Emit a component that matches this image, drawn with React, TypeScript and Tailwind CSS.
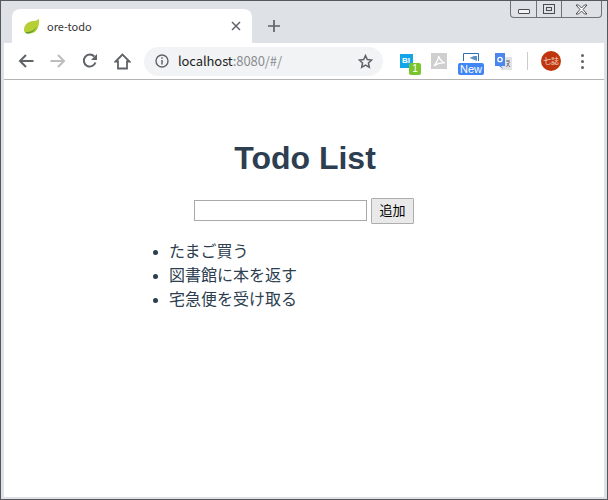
const ui = { fontFamily: '"Noto Sans CJK JP", "Liberation Sans", sans-serif' };
const latin = { fontFamily: '"Liberation Sans", sans-serif' };

function Leaf() {
  return (
    <svg width="17" height="17" viewBox="0 0 17 17" className="shrink-0">
      <path d="M1 12C1 6 6 3 11 3c2 0 4-1 5-2.500C16.500 6 15.500 15 7 15.500 3.500 15.800 1 15 1 12z" fill="#b5cf34" />
      <path d="M2.500 14C7 14.500 11 13 13.500 8.500 12 13.500 7.500 16 3.500 15.500z" fill="#5c9a2c" />
    </svg>
  );
}

function WindowControls() {
  return (
    <div className="flex h-[17px] w-[92px] rounded-b-[4px] border border-t-0 border-[#6f7378] bg-[#dee1e6]">
      <div className="flex w-[26px] items-end justify-center border-r border-[#6f7378] pb-[3px]">
        <div className="h-[5px] w-[12px] rounded-[1px] border border-[#4a4d50] bg-white/60" />
      </div>
      <div className="flex w-[25px] items-center justify-center border-r border-[#6f7378]">
        <div className="flex h-[10px] w-[12px] items-center justify-center border border-[#4a4d50]">
          <div className="h-[4px] w-[6px] border border-[#4a4d50]" />
        </div>
      </div>
      <div className="flex flex-1 items-center justify-center">
        <svg width="13" height="11" viewBox="0 0 13 11">
          <path d="M1 1h2.500L6.500 4 9.500 1H12L8 5.500l4 4.500H9.500L6.500 7 3.500 10H1l4-4.500z" fill="#fff" stroke="#4a4d50" />
        </svg>
      </div>
    </div>
  );
}

function Tabs() {
  return (
    <div className="flex h-[42px] items-end pl-[8px]">
      <div className="flex h-[34px] w-[240px] items-center rounded-t-[8px] bg-white pl-[11px] pr-[11px]">
        <Leaf />
        <span className="ml-[7px] flex-1 text-[11px] text-[#333]" style={ui}>ore-todo</span>
        <svg width="10" height="10" viewBox="0 0 10 10">
          <path d="M1 1l8 8M9 1l-8 8" stroke="#5f6368" strokeWidth="1.500" />
        </svg>
      </div>
      <div className="flex h-[34px] w-[44px] items-center justify-center">
        <svg width="12" height="12" viewBox="0 0 12 12">
          <path d="M6 0v12M0 6h12" stroke="#5f6368" strokeWidth="1.700" />
        </svg>
      </div>
      <div className="flex-1 self-start">
        <div className="ml-auto mr-[2px] w-[92px]">
          <WindowControls />
        </div>
      </div>
    </div>
  );
}

function Extensions() {
  return (
    <div className="mt-[6px] flex items-start">
      {/* blue "BI" extension with the green count badge */}
      <div className="flex w-[21px] flex-col">
        <div className="h-[14px] w-[13px] bg-[#12a5e8] pl-[2px] text-[8px] font-bold leading-[14px] text-white" style={latin}>
          BI
        </div>
        <div className="-mt-[5px] ml-[9px] h-[12px] w-[12px] rounded-[2px] bg-[#7ac52e] text-center text-[10px] leading-[12px] text-white" style={latin}>
          1
        </div>
      </div>
      <svg width="16" height="16" viewBox="0 0 16 16" className="ml-[10px] -mt-[1px]">
        <rect width="16" height="16" fill="#cfcfcf" />
        <path d="M3 13C6 9 8 6 7.500 3 9 7 11 9 14 10 10 9.500 6 10.500 3 13z" fill="none" stroke="#fff" strokeWidth="1.200" />
      </svg>
      <div className="ml-[11px] -mt-[1px] flex w-[26px] flex-col items-center">
        <svg width="16" height="9" viewBox="0 0 16 9">
          <path d="M.5 8V.5h15V8" fill="none" stroke="#2f6fb5" />
          <path d="M2 3h12v5z" fill="#5b8fc7" />
          <path d="M2 3h9l-7 3h-2z" fill="#fff" />
        </svg>
        <div className="mt-[1px] h-[12px] w-[26px] rounded-[2px] bg-[#4285f4] text-center text-[11px] leading-[12px] text-white" style={latin}>
          New
        </div>
      </div>
      <svg width="17" height="19" viewBox="0 0 17 19" className="ml-[11px] -mt-[1px]">
        <rect x="6" y="4" width="11" height="13" fill="#e1e3e6" />
        <path d="M11 8h4M13 7v2M11.500 14l3-5M12 10l3 4" stroke="#77797c" />
        <path d="M0 0h10v13H6l2 3-4-3H0z" fill="#4b86ec" />
        <circle cx="5" cy="6.500" r="2.200" fill="none" stroke="#fff" strokeWidth="1.300" />
      </svg>
    </div>
  );
}

function Toolbar() {
  return (
    <div className="flex h-[37px] items-center border-b border-[#b4b4b4] bg-white pl-[14px]">
      <svg width="16" height="14" viewBox="0 0 16 14">
        <path d="M15.500 7H2M8 1L2 7l6 6" fill="none" stroke="#5f6368" strokeWidth="2" />
      </svg>
      <svg width="16" height="14" viewBox="0 0 16 14" className="ml-[16px]">
        <path d="M.5 7H14M8 1l6 6-6 6" fill="none" stroke="#bdbdbd" strokeWidth="2" />
      </svg>
      <svg width="16" height="16" viewBox="0 0 16 16" className="ml-[16px]">
        <path d="M13.500 9.500A6 6 0 1 1 12.300 3.500" fill="none" stroke="#5f6368" strokeWidth="2" />
        <path d="M15 1v6H9z" fill="#5f6368" />
      </svg>
      <svg width="17" height="17" viewBox="0 0 17 17" className="ml-[16px]">
        <path d="M8.500 1.500L1.500 8.500H4V15.500H13V8.500H15.500z" fill="none" stroke="#5f6368" strokeWidth="1.800" />
      </svg>
      <div className="ml-[13px] flex h-[29px] w-[239px] items-center rounded-full bg-[#f1f3f4] pl-[11px] pr-[10px]">
        <svg width="14" height="14" viewBox="0 0 14 14">
          <circle cx="7" cy="7" r="6" fill="none" stroke="#5f6368" strokeWidth="1.400" />
          <path d="M7 6v4.500" stroke="#5f6368" strokeWidth="1.500" />
          <path d="M7 3.200v1.600" stroke="#5f6368" strokeWidth="1.500" />
        </svg>
        <span className="ml-[9px] flex-1 text-[13px] tracking-[-0.1px] text-[#8a8d91]" style={ui}>
          <span className="text-[#222]">localhost</span>:8080/#/
        </span>
        <svg width="15" height="15" viewBox="0 0 24 24">
          <path d="M12 2.500l2.900 6.300 6.900.8-5.100 4.700 1.400 6.800L12 17.700l-6.100 3.400 1.400-6.800L2.200 9.600l6.900-.8z" fill="none" stroke="#5f6368" strokeWidth="2.400" />
        </svg>
      </div>
      <div className="ml-[17px]">
        <Extensions />
      </div>
      <div className="ml-[15px] h-[18px] w-px bg-[#ccc]" />
      <div className="ml-[13px] flex h-[20px] w-[20px] items-center justify-center rounded-full bg-[#bf360c] text-[8px] text-[#f3d5c8]" style={ui}>
        七誌
      </div>
      <div className="ml-[20px] flex flex-col gap-[3px]">
        <div className="h-[3px] w-[3px] rounded-full bg-[#5f6368]" />
        <div className="h-[3px] w-[3px] rounded-full bg-[#5f6368]" />
        <div className="h-[3px] w-[3px] rounded-full bg-[#5f6368]" />
      </div>
    </div>
  );
}

function TodoPage() {
  const todos = ["たまご買う", "図書館に本を返す", "宅急便を受け取る"];
  return (
    <div className="flex-1 bg-white text-[#2c3e50]" style={{ fontFamily: '"Liberation Sans", "Noto Sans CJK JP", sans-serif' }}>
      <h1 className="mt-[60px] pl-[2px] text-center text-[32px] font-bold leading-[37px]">Todo List</h1>
      <div className="mt-[21px] flex items-start pl-[190px]">
        <input className="mt-[2px] h-[21px] w-[173px] border border-[#a9a9a9] bg-white" />
        <button className="ml-[4px] h-[26px] w-[43px] rounded-[1px] border border-[#adadad] bg-[#e9e9e9] pb-[2px] text-[13px] text-black" style={ui}>
          追加
        </button>
      </div>
      <ul className="mt-[16px] list-disc pl-[165px] text-[16px] leading-[24px]">
        {todos.map((t) => (
          <li key={t}>{t}</li>
        ))}
      </ul>
    </div>
  );
}

export default function App() {
  return (
    <div className="flex h-[500px] w-[608px] flex-col overflow-hidden border border-[#55585c] bg-[#dee1e6] pb-[2px] pl-[3px] pr-[3px]">
      <Tabs />
      <Toolbar />
      <TodoPage />
    </div>
  );
}
